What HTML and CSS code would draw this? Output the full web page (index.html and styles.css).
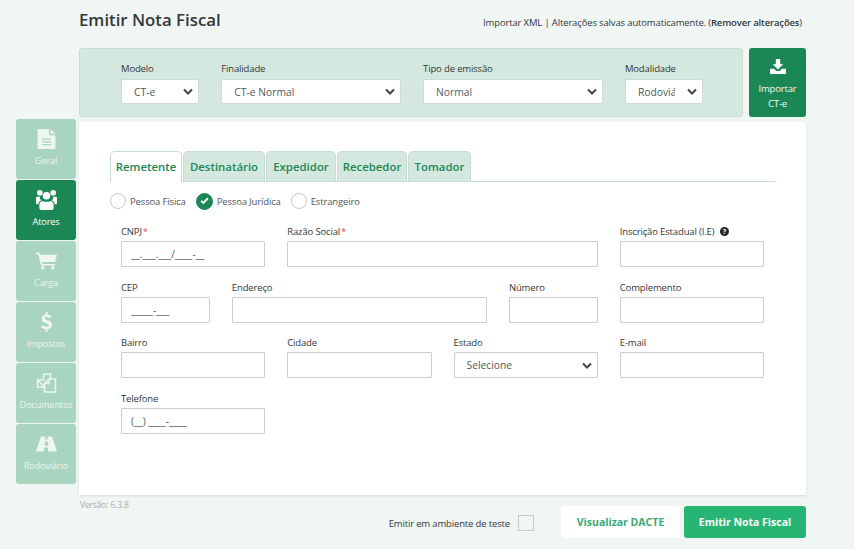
FILE: index.html
```html
<!DOCTYPE html>
<html>
<head>
    <title>Emitir Nota Fiscal</title>
    <link rel="stylesheet" href="styles.css">
</head>
<body>
    <div class="app">
        <!-- Side menu -->
        <nav class="side-menu">
            <a class="side-item">
                <svg class="side-icon" viewBox="0 0 18 20"><path d="M0 1.200A1.200 1.200 0 0 1 1.200 0H11.500v5a1.200 1.200 0 0 0 1.200 1.200H18v12.600a1.200 1.200 0 0 1-1.200 1.200H1.200A1.200 1.200 0 0 1 0 18.800z"/><path d="M13 0l5 4.800H13z"/><path class="cut" d="M4.500 9.500h9v1.200h-9zM4.500 12.300h9v1.200h-9zM4.500 15.100h9v1.200h-9z"/></svg>
                <span>Geral</span>
            </a>
            <a class="side-item active">
                <svg class="side-icon" viewBox="0 0 22 21"><circle cx="4" cy="3" r="3"/><circle cx="18" cy="3" r="3"/><circle cx="11" cy="6" r="4"/><path d="M1 7h3a5 5 0 0 0 1.500 4C3 12 2.500 13.500 2.500 15H1a1 1 0 0 1-1-1V8a1 1 0 0 1 1-1zM18 7h3a1 1 0 0 1 1 1v6a1 1 0 0 1-1 1h-1.500c0-1.500-.5-3-3-4A5 5 0 0 0 18 7z"/><path d="M7 11.500c2 1.200 6 1.200 8 0 2 .5 3.500 2 3.500 4V19a2 2 0 0 1-2 2h-11a2 2 0 0 1-2-2v-3.500c0-2 1.500-3.500 3.500-4z"/></svg>
                <span>Atores</span>
            </a>
            <a class="side-item">
                <svg class="side-icon" viewBox="0 0 20 16"><path d="M0 0h3.300l.5 2H20l-1.800 7H6l.4 1.800h11.800v1.500H4.900L2 1.600H0z"/><circle cx="6.500" cy="14.400" r="1.600"/><circle cx="16" cy="14.400" r="1.600"/></svg>
                <span>Carga</span>
            </a>
            <a class="side-item">
                <svg class="side-icon" viewBox="0 0 13 24"><path d="M5.300 0h2.400v3c1.800.2 3.400.9 4.600 1.800l-1.500 2.700C9.400 6.500 8 6 6.600 6 5.200 6 4.300 6.500 4.300 7.400c0 1 1 1.400 3.200 2.200 3 1 5.500 2.200 5.500 5.600 0 2.800-2 4.800-5.300 5.300V24H5.300v-3.500c-2-.2-3.900-1-5.300-2.300l1.700-2.600c1.500 1.200 3.200 2 4.900 2 1.700 0 2.700-.7 2.700-1.800 0-1.100-1-1.600-3.300-2.400C2.300 12.400.7 11 .7 8 .7 5.400 2.500 3.500 5.300 3z"/></svg>
                <span>Impostos</span>
            </a>
            <a class="side-item">
                <svg class="side-icon line" viewBox="0 0 20 20"><path d="M7 1h7v5M8 14H1V7z"/><path d="M7 1v6H1"/><path d="M12.500 6H19v13H8v-8.500z"/><path d="M12.500 6v4.500H8"/></svg>
                <span>Documentos</span>
            </a>
            <a class="side-item">
                <svg class="side-icon" viewBox="0 0 21 15"><path d="M5 0h4.400l-.2 3h2.600l-.2-3H16l5 15h-8.800l-.3-4H8.100l-.3 4H0zM9 5l-.3 4h3.600L12 5z"/></svg>
                <span>Rodoviário</span>
            </a>
        </nav>

        <div class="content">
            <header class="top">
                <h1>Emitir Nota Fiscal</h1>
                <p class="top-note">Importar XML | Alterações salvas automaticamente. (<b>Remover alterações</b>)</p>
            </header>

            <div class="top-row">
                <!-- Document options -->
                <div class="options">
                    <div class="option w-small">
                        <label>Modelo</label>
                        <select><option>CT-e</option></select>
                    </div>
                    <div class="option w-large">
                        <label>Finalidade</label>
                        <select><option>CT-e Normal</option></select>
                    </div>
                    <div class="option w-large">
                        <label>Tipo de emissão</label>
                        <select><option>Normal</option></select>
                    </div>
                    <div class="option w-small">
                        <label>Modalidade</label>
                        <select><option>Rodoviário</option></select>
                    </div>
                </div>
                <a class="import-btn">
                    <svg viewBox="0 0 18 17"><path d="M6.500 0h5v6H15L9 12 3 6h3.500z"/><path d="M0 11h4.500L7 13.500h4L13.500 11H18v6H0z"/></svg>
                    <span>Importar CT-e</span>
                </a>
            </div>

            <main class="card">
                <div class="tabs">
                    <a class="tab active">Remetente</a>
                    <a class="tab t-dest">Destinatário</a>
                    <a class="tab t-exp">Expedidor</a>
                    <a class="tab t-rec">Recebedor</a>
                    <a class="tab t-tom">Tomador</a>
                </div>

                <div class="radios">
                    <span class="radio"><i class="dot"></i>Pessoa Física</span>
                    <span class="radio"><i class="dot checked"><svg viewBox="0 0 12 10"><path d="M1.500 5.200 4.500 8l6-6.300"/></svg></i>Pessoa Jurídica</span>
                    <span class="radio"><i class="dot"></i>Estrangeiro</span>
                </div>

                <form class="fields">
                    <div class="field s3">
                        <label>CNPJ<em>*</em></label>
                        <input type="text" value="__.___.___/____-__">
                    </div>
                    <div class="field s6">
                        <label>Razão Social<em>*</em></label>
                        <input type="text">
                    </div>
                    <div class="field s3">
                        <label>Inscrição Estadual (I.E)
                            <svg class="help" viewBox="0 0 10 10"><circle cx="5" cy="5" r="5"/><text x="5" y="8" text-anchor="middle">?</text></svg>
                        </label>
                        <input type="text">
                    </div>

                    <div class="field s2">
                        <label>CEP</label>
                        <input type="text" value="_____-___">
                    </div>
                    <div class="field s5">
                        <label>Endereço</label>
                        <input type="text">
                    </div>
                    <div class="field s2">
                        <label>Número</label>
                        <input type="text">
                    </div>
                    <div class="field s3">
                        <label>Complemento</label>
                        <input type="text">
                    </div>

                    <div class="field s3">
                        <label>Bairro</label>
                        <input type="text">
                    </div>
                    <div class="field s3">
                        <label>Cidade</label>
                        <input type="text">
                    </div>
                    <div class="field s3">
                        <label>Estado</label>
                        <select><option>Selecione</option></select>
                    </div>
                    <div class="field s3">
                        <label>E-mail</label>
                        <input type="text">
                    </div>

                    <div class="field s3">
                        <label>Telefone</label>
                        <input type="text" value="(__) ____-____">
                    </div>
                </form>
            </main>

            <footer class="bottom">
                <span class="version">Versão: 6.3.8</span>
                <div class="actions">
                    <label class="test-env">Emitir em ambiente de teste <i class="box"></i></label>
                    <button type="button" class="btn-light">Visualizar DACTE</button>
                    <button type="button" class="btn-green">Emitir Nota Fiscal</button>
                </div>
            </footer>
        </div>
    </div>
</body>
</html>
```

FILE: styles.css
```css
body {
    margin: 0;
    background-color: #f0f6f4;
    color: #33383a;
    font-family: "Open Sans", "Noto Sans", sans-serif;
    font-size: 10px;
    letter-spacing: -0.15px;
}

.app {
    display: flex;
    width: 806px;
    height: 549px;
    padding-left: 16px;
    box-sizing: border-box;
}

/* Side menu */
.side-menu {
    width: 60px;
    margin-right: 3px;
    padding-top: 119px;
    flex: none;
}

.side-item {
    display: flex;
    flex-direction: column;
    align-items: center;
    height: 60px;
    margin-bottom: 1px;
    background-color: #a9d4c0;
    border-radius: 3px;
    color: #eaf4ef;
    font-size: 9.200px;
    line-height: 14px;
}

.side-item.active {
    background-color: #1a8754;
    color: #fff;
}

.side-icon {
    width: 21px;
    height: 20px;
    margin-top: 10px;
    margin-bottom: 5px;
    fill: #eef6f2;
}

.side-item.active .side-icon {
    fill: #fff;
}

.side-icon .cut {
    fill: #a9d4c0;
}

.side-icon.line {
    fill: none;
    stroke: #eef6f2;
    stroke-width: 1.500;
}

/* Header */
.content {
    flex: 1;
    min-width: 0;
}

.top {
    display: flex;
    justify-content: space-between;
    align-items: flex-start;
    height: 48px;
}

.top h1 {
    margin: 8px 0 0;
    font-size: 16.800px;
    font-weight: 600;
    letter-spacing: 0;
    color: #33383a;
}

.top-note {
    margin: 16px 4px 0 0;
    font-size: 9.500px;
}

.top-note b {
    font-weight: 600;
}

/* Options panel */
.top-row {
    display: flex;
    justify-content: space-between;
    height: 69px;
}

.options {
    display: flex;
    gap: 22.300px;
    width: 664px;
    padding: 13px 0 0 41px;
    box-sizing: border-box;
    background-color: #d5e8df;
    border: 1px solid #c6ddd2;
    border-radius: 3px;
}

.option label {
    display: block;
    height: 17px;
    font-size: 9.500px;
}

.w-small {
    width: 78px;
}

.w-large {
    width: 179.500px;
}

select {
    appearance: none;
    width: 100%;
    height: 25px;
    padding: 0 27px 0 12px;
    background: #fff url("data:image/svg+xml,%3Csvg xmlns='http://www.w3.org/2000/svg' viewBox='0 0 10 7'%3E%3Cpath d='M1 1.500 5 5.500l4-4' fill='none' stroke='%23444' stroke-width='2'/%3E%3C/svg%3E") no-repeat right 5px center / 10px 7px;
    border: 1px solid #ced9de;
    border-radius: 2px;
    color: #505a5f;
    font-family: inherit;
    font-size: 10.300px;
}

.import-btn {
    display: flex;
    flex-direction: column;
    align-items: center;
    width: 57px;
    background-color: #1a8754;
    border-radius: 3px;
    color: #f2f8f5;
    font-size: 9.500px;
    line-height: 15px;
    text-align: center;
}

.import-btn span {
    width: 44px;
}

.import-btn svg {
    width: 16px;
    height: 15px;
    margin: 11px 0 7px;
    fill: #fff;
}

/* Main card */
.card {
    height: 373px;
    margin-top: 5px;
    padding: 29px 31px 0;
    box-sizing: border-box;
    background-color: #fff;
    box-shadow: 0 1px 2px rgba(80, 110, 100, 0.2);
}

.tabs {
    display: flex;
    height: 30px;
    border-bottom: 1px solid #c6ddd2;
}

.tab {
    width: 72px;
    height: 30px;
    margin-right: 1px;
    background-color: #d5e8df;
    border: 1px solid #c6ddd2;
    border-bottom: none;
    border-radius: 5px 5px 0 0;
    box-sizing: border-box;
    color: #1a8754;
    font-size: 11.400px;
    font-weight: 600;
    letter-spacing: 0;
    line-height: 30px;
    text-align: center;
}

.tab.active {
    background-color: #fff;
    height: 31px;
}

.t-dest {
    width: 82px;
}

.t-exp,
.t-rec {
    width: 70px;
}

.t-tom {
    width: 63px;
}

.radios {
    display: flex;
    align-items: center;
    gap: 10px;
    height: 16px;
    margin-top: 11px;
}

.radio {
    display: flex;
    align-items: center;
    gap: 4px;
    font-size: 9.500px;
    color: #50595d;
}

.dot {
    display: block;
    width: 16px;
    height: 16px;
    background-color: #fff;
    border: 1px solid #c5c9c9;
    border-radius: 50%;
    box-sizing: border-box;
}

.dot.checked {
    background-color: #1a8754;
    border-color: #1a8754;
    width: 17px;
    height: 17px;
    padding: 3px;
}

.dot svg {
    display: block;
    fill: none;
    stroke: #fff;
    stroke-width: 2.600;
}

/* Form grid */
.fields {
    display: grid;
    grid-template-columns: repeat(12, 1fr);
    column-gap: 22px;
    margin: 14px 11px 0;
}

.field {
    height: 55.500px;
}

.field label {
    display: block;
    height: 18px;
    padding-top: 2px;
    box-sizing: border-box;
    font-size: 9.500px;
}

.field em {
    color: #d9534f;
    font-style: normal;
    margin-left: 1px;
}

.s2 {
    grid-column: span 2;
}

.s3 {
    grid-column: span 3;
}

.s5 {
    grid-column: span 5;
}

.s6 {
    grid-column: span 6;
}

.field input,
.field select {
    display: block;
    width: 100%;
    height: 26px;
    box-sizing: border-box;
    border: 1px solid #ccc;
    border-radius: 1px;
    color: #50595d;
    font-family: inherit;
}

.field input {
    padding: 0 9px;
    background-color: #fff;
    font-size: 10px;
}

.field select {
    font-size: 10.300px;
}

.help {
    width: 9px;
    height: 9px;
    margin-left: 3px;
    vertical-align: -1px;
    fill: #23292b;
}

.help text {
    fill: #fff;
    font-size: 8px;
    font-weight: 700;
}

/* Footer */
.bottom {
    display: flex;
    justify-content: space-between;
    align-items: flex-start;
    padding-top: 4px;
}

.version {
    margin-left: 1px;
    color: #a7adad;
    font-size: 8.500px;
}

.actions {
    display: flex;
    align-items: center;
    gap: 4px;
    margin-top: 7px;
}

.test-env {
    display: flex;
    align-items: center;
    gap: 8px;
    margin-right: 23px;
    padding-top: 2px;
    font-size: 9.500px;
}

.box {
    display: block;
    width: 16px;
    height: 16px;
    border: 1px solid #c5c9c9;
    box-sizing: border-box;
}

.btn-light,
.btn-green {
    height: 32px;
    border: none;
    border-radius: 3px;
    font-family: inherit;
    font-size: 10.500px;
    font-weight: 700;
}

.btn-light {
    width: 119px;
    background-color: #fff;
    color: #3aa97a;
}

.btn-green {
    width: 122px;
    background-color: #26b573;
    color: #fff;
}
```
